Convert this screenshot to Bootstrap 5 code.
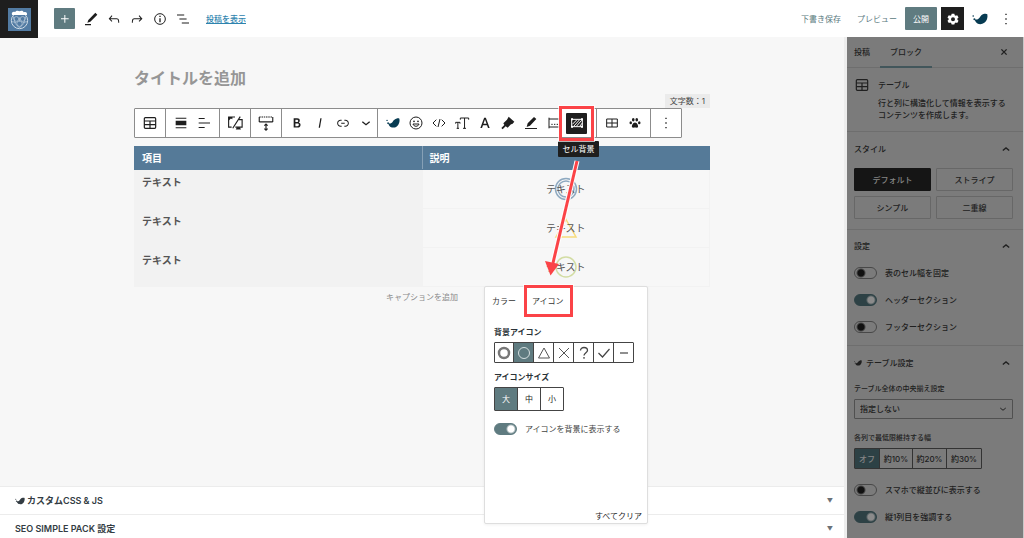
<!DOCTYPE html>
<html lang="ja">
<head>
<meta charset="utf-8">
<meta name="viewport" content="width=device-width, initial-scale=1">
<title>投稿を編集</title>
<link href="https://cdn.jsdelivr.net/npm/bootstrap@5.3.0/dist/css/bootstrap.min.css" rel="stylesheet">
<style>
  :root { --teal:#5f7b80; --ink:#1e1e1e; --steel:#557a98; --red:#fb4347; --dim:#7b7b7b; --dim-line:#6e6e6e; }
  body { font-family:Inter,"Noto Sans CJK JP",sans-serif; font-size:8px; line-height:12px; color:var(--ink); background:#f7f7f7; }
  button { color:inherit; font:inherit; background:none; border:0; padding:0; }
  svg { display:block; fill:currentColor; }
  .ic { width:16px; height:16px; }
  .line { fill:none; stroke:currentColor; stroke-width:1.5; }
  .btn { --bs-btn-font-size:8px; --bs-btn-line-height:12px; --bs-btn-padding-x:0; --bs-btn-padding-y:0; --bs-btn-border-radius:1px; }

  .topbar { height:37px; background:#fff; }
  .site-logo { width:38px; height:38px; background:var(--ink); }
  .tool { width:23px; height:22px; }
  .btn-teal { background:var(--teal); color:#fff; border:0; }
  .btn-add { width:21px; height:21px; }
  .btn-publish { width:32px; height:23px; }
  .view-link { color:#2d83ae; font-weight:500; }
  .text-tool { color:#5b7a80; }
  .btn-gear { background:var(--ink); color:#fff; width:23px; height:23px; }
  .navy { color:#073b52; }

  .canvas { max-width:576px; width:100%; padding-top:29px; }
  .post-title { font-size:16px; line-height:24px; color:#969696; font-weight:600; }
  .char-count { background:#ebebeb; height:14px; line-height:14px; padding:0 5px; color:#444; }
  .block-bar { background:#fff; border:1px solid #8c8c8c; border-radius:1px; height:30px; width:fit-content; }
  .bar-group { padding:0 4px 0 3px; border-right:1px solid #8c8c8c; }
  .bar-group:last-child { border-right:0; }
  .bar-rich { padding-right:8px; }
  .active-tool { width:21px; height:21px; background:var(--ink); color:#fff; border-radius:1px; }
  .frame { position:absolute; border:3px solid var(--red); box-shadow:0 0 0 1px #ffffffb0; z-index:5; pointer-events:none; }
  .frame-tool { inset:-7px; }
  .tip { position:absolute; top:28px; left:-8px; width:41px; line-height:16px; background:var(--ink); color:#fff; border-radius:1px; z-index:4; }

  .sheet { font-size:10px; line-height:14px; table-layout:fixed; color:#555; margin-top:8px; }
  .sheet th, .sheet td { border:1px solid #f2f2f2; padding:0 7px; height:39px; }
  .sheet thead th { background:var(--steel); color:#fff; height:23px; border-color:var(--steel); border-right-color:#86a0b6; }
  .sheet thead th:last-child { border-right-color:var(--steel); }
  .sheet tbody th { background:#f2f2f2; vertical-align:top; padding-top:5px; font-weight:600; }
  .sheet td { text-align:center; }
  .mark-cell { position:relative; display:inline-block; }
  .mark-cell svg { position:absolute; inset:50% auto auto 50%; translate:-50% -50%; width:24px; height:24px; fill:none; }
  .mark-cell span { position:relative; }
  .caption-hint { color:#8a8a8a; line-height:12px; padding-top:4px; }
  .arrow { position:absolute; left:536px; top:116px; width:56px; height:126px; z-index:6; pointer-events:none; }

  .pop { position:absolute; left:484px; top:249px; width:164px; height:238px; background:#fff; border:1px solid #dedede; border-radius:2px; box-shadow:0 1px 3px #0000000f; z-index:3; padding:0 9px; }
  .pop-tabs { margin:0 -2px 11px; }
  .pop-tab { height:28px; color:#333; }
  .frame-tab { inset:-2px -9px -2px -8px; }
  .pop h2 { font-size:8px; line-height:12px; font-weight:700; color:#2b3338; }
  .pop .opt { color:#444; font-weight:400; }
  .pop-clear { margin:0 -4px 1px 0; }
  .seg { display:flex; width:fit-content; border:1px solid #444; border-radius:1px; }
  .seg button { border-right:1px solid #444; }
  .seg button:last-child { border-right:0; }
  .seg .on { background:var(--teal); color:#fff; }
  .seg-icon button { width:20px; height:19px; }
  .seg-icon button:first-child, .seg-icon button:last-child { width:19px; }
  .seg-size button { width:23px; height:22px; }
  .seg-size button:last-child { width:22px; }

  .switch { appearance:none; flex:none; width:23px; height:12px; border:1px solid #222; border-radius:6px; margin:0; background:radial-gradient(circle at 6px 5px,#111 3px,transparent 5px); }
  .switch:checked { background:radial-gradient(circle at 16px 5px,#fff 3px,var(--teal) 5px); border-color:var(--teal); }
  .side .switch { border-color:#484848; }
  .side .switch:checked { background:radial-gradient(circle at 16px 5px,#8b8b8b 3px,#2d4145 5px); border-color:#2d4145; }

  .side { width:180px; flex:none; background:var(--dim); color:#202020; border-left:3px solid #ededed; border-right:1px solid #c8c8c8; }
  .side-tabs { height:31px; border-bottom:1px solid var(--dim-line); padding-left:7px; font-weight:500; }
  .side-tabs button { font-weight:500; }
  .side-tabs .current { width:52px; margin-left:10px; border-bottom:2px solid #42565b; margin-bottom:-1px; }
  .panel { padding:0 10px 0 7px; border-bottom:1px solid var(--dim-line); }
  .panel h2 { font-size:8px; line-height:12px; font-weight:500; margin:0; }
  .panel-card { padding-top:9px; height:64px; }
  .panel-head { height:33px; }
  .styles { display:grid; grid-template-columns:1fr 1fr; gap:5px; padding:3px 0 10px; }
  .styles button { height:23px; border:1px solid #676767; border-radius:1px; font-weight:500; }
  .styles .chosen { background:#151515; color:#858585; border-color:#151515; }
  .panel-head-low { height:29px; padding-top:3px; }
  .panel-toggles { padding-bottom:5px; }
  .opt { height:27px; gap:8px; font-weight:500; }
  .tiny { font-size:7px; line-height:12px; font-weight:500; }
  .tiny-next { margin-top:13px; }
  .pick { appearance:none; height:20px; width:100%; border:1px solid #505050; border-radius:1px; background:transparent; color:#202020; font-size:8px; font-weight:500; padding:0 5px; }
  .side .seg { border-color:#333; font-weight:500; }
  .side .seg button { height:19px; width:34px; border-color:#333; }
  .side .seg .on { width:25px; background:#2d4145; color:#858585; }
  .side .seg .on + button { width:33px; }
  .after-seg { margin-top:7px; }

  .meta-row { background:#fff; border-top:1px solid #ececec; font-size:9px; font-weight:700; color:#333c43; padding:8px 11px 3px 15px; }
  .meta-row:first-child { padding-bottom:7px; }
  .meta-row h2 { font-size:9px; line-height:12px; font-weight:600; margin:0; gap:2px; }
  .meta-row small { font-size:6px; color:#6b7177; }
</style>
</head>
<body>
<svg class="d-none" aria-hidden="true">
  <symbol id="bird" viewBox="0 0 24 24"><path d="M4 12.500c3.500.8 6-.3 7.500-2.800C13 7 15.500 4.800 18.500 4.200c2-.4 3.600-.1 4.500.6 1 5.200-.8 10.200-4.500 13-4 3-9.800 2.700-12.500-.8-1.100-1.400-1.800-2.800-2-4.500z"/><circle cx="1.800" cy="7.500" r="1.200"/><circle cx="3.600" cy="12.300" r="1.500"/></symbol>
  <symbol id="up" viewBox="0 0 24 24"><path d="M6.500 14.500l5.500-4.500 5.500 4.500" fill="none" stroke="currentColor" stroke-width="2.400"/></symbol>
  <symbol id="down" viewBox="0 0 24 24"><path d="M6.500 10l5.500 4.500 5.500-4.500" fill="none" stroke="currentColor" stroke-width="2"/></symbol>
  <symbol id="grid" viewBox="0 0 24 24"><g fill="none" stroke="currentColor" stroke-width="1.800"><rect x="3.500" y="4" width="17" height="16" rx="1.500"/><path d="M3.500 9h17M3.500 14.500h17M12 9v11"/></g></symbol>
  <symbol id="dots" viewBox="0 0 24 24"><path d="M13 20h-2v-2h2v2zm0-7h-2v-2h2v2zm0-7h-2V4h2v2z"/></symbol>
  <symbol id="pen" viewBox="0 0 24 24"><path d="M8 13.500L18.500 2.500l3 3L11 16l-4.500 1.500zM3 19.500h9v2H3z"/></symbol>
</svg>

<div class="min-vh-100 d-flex flex-column">
  <header class="topbar d-flex align-items-center">
    <a href="#" class="site-logo d-flex align-items-center justify-content-center align-self-start" aria-label="ダッシュボード">
      <svg width="23" height="23" viewBox="0 0 22 22"><path fill="#527ba3" d="M0 0h22v22H0z"/><circle cx="11" cy="12" r="7.800" fill="none" stroke="#d5e0e9" stroke-width=".9"/><g fill="none" stroke="#b9cbdb" stroke-width=".7"><circle cx="8" cy="10.500" r="2.300"/><circle cx="14" cy="10.500" r="2.300"/><circle cx="11" cy="15" r="2.600"/><path d="M11 9v4M5 8l2 7 4 4 4-4 2-7M4 13l4 1M18 13l-4 1"/></g><path d="M4 6.800c-1.200-2.500.8-3.800 2.800-3 1-1.500 3-1.500 4-.6 2-1.200 4-.6 4.200.8 2.600-.8 3.800.8 3 2.800z" fill="#fff"/></svg>
    </a>
    <nav class="d-flex align-items-center flex-grow-1" aria-label="ツール">
      <button class="btn btn-teal btn-add d-flex align-items-center justify-content-center ms-3" aria-label="追加"><svg class="ic" viewBox="0 0 24 24"><path d="M11 12.500V17.500H12.500V12.500H17.500V11H12.500V6H11V11H6V12.500H11Z"/></svg></button>
      <div class="d-flex ms-1">
        <button class="tool d-flex align-items-center justify-content-center" aria-label="編集"><svg class="ic"><use href="#pen"/></svg></button>
        <button class="tool d-flex align-items-center justify-content-center" aria-label="元に戻す"><svg class="ic" viewBox="0 0 24 24"><path d="M18.300 11.700c-.6-.6-1.400-.9-2.300-.9H6.700l2.900-3.300-1.100-1-4.500 5L8.500 16l1-1-2.700-2.700H16c.5 0 .9.2 1.300.5 1 1 1 3.400 1 4.500v.3h1.500v-.2c0-1.500 0-4.300-1.500-5.700z"/></svg></button>
        <button class="tool d-flex align-items-center justify-content-center" aria-label="やり直す"><svg class="ic" viewBox="0 0 24 24"><path d="M15.600 6.500l-1.100 1 2.900 3.300H8c-.9 0-1.700.3-2.300.9-1.400 1.500-1.400 4.200-1.400 5.600v.2h1.500v-.3c0-1.100 0-3.500 1-4.500.3-.3.7-.5 1.300-.5h9.200L14.500 15l1.100 1.100 4.600-4.600-4.600-5z"/></svg></button>
        <button class="tool d-flex align-items-center justify-content-center" aria-label="詳細"><svg class="ic" viewBox="0 0 24 24"><circle cx="12" cy="12" r="8" class="line"/><path d="M11 11h2v6h-2zM11 7h2v2h-2z"/></svg></button>
        <button class="tool d-flex align-items-center justify-content-center" aria-label="リスト表示"><svg class="ic" viewBox="0 0 24 24"><path d="M13.800 5.200H3v1.500h10.800V5.200zm-3.600 12v1.500H21v-1.500H10.200zm7.200-6H6.600v1.500h10.800v-1.500z"/></svg></button>
      </div>
      <a href="#" class="view-link ms-2 ps-1">投稿を表示</a>
    </nav>
    <div class="d-flex align-items-center">
      <button class="text-tool">下書き保存</button>
      <button class="text-tool ms-3 me-2">プレビュー</button>
      <button class="btn btn-teal btn-publish me-1">公開</button>
      <button class="btn-gear d-flex align-items-center justify-content-center" aria-label="設定"><svg class="ic" viewBox="0 0 24 24"><path fill-rule="evenodd" d="M10 4h4l.6 2.200 1.500.9 2.200-.8 2 3.400-1.700 1.600v1.800l1.700 1.600-2 3.400-2.200-.8-1.500.9L14 20.400h-4l-.6-2.200-1.500-.9-2.200.8-2-3.400 1.700-1.600v-1.800L3.700 9.700l2-3.400 2.200.8 1.500-.9zM12 9.200a3 3 0 1 0 0 6 3 3 0 0 0 0-6z"/></svg></button>
      <button class="navy ms-2" aria-label="SWELL"><svg class="ic"><use href="#bird"/></svg></button>
      <button class="ms-2 me-2 px-1" aria-label="オプション"><svg width="12" height="16" viewBox="4 0 16 24"><path d="M13 20h-2v-2h2v2zm0-7h-2v-2h2v2zm0-7h-2V4h2v2z"/></svg></button>
    </div>
  </header>

  <div class="d-flex flex-grow-1">
    <main class="flex-grow-1 d-flex flex-column position-relative">
      <div class="flex-grow-1 d-flex justify-content-center">
        <div class="canvas">
          <h1 class="post-title mb-0">タイトルを追加</h1>
          <div class="d-flex justify-content-end pt-1"><span class="char-count">文字数：1</span></div>
          <div class="block-bar d-flex" role="toolbar" aria-label="ブロックツール">
            <div class="bar-group d-flex align-items-center"><button class="tool d-flex align-items-center justify-content-center" aria-label="テーブル"><svg class="ic"><use href="#grid"/></svg></button></div>
            <div class="bar-group d-flex align-items-center">
              <button class="tool d-flex align-items-center justify-content-center" aria-label="配置"><svg class="ic" viewBox="0 0 24 24"><path d="M4 4h16v1.600H4zM4 8.500h16v7H4zM4 18.400h16V20H4z"/></svg></button>
              <button class="tool d-flex align-items-center justify-content-center" aria-label="カラム揃え"><svg class="ic" viewBox="0 0 24 24"><path d="M4 4.500h9V6H4zM4 11.200h17v1.500H4zM4 18h9v1.500H4z"/></svg></button>
            </div>
            <div class="bar-group d-flex align-items-center"><button class="tool d-flex align-items-center justify-content-center" aria-label="表示デバイス"><svg width="18" height="18" viewBox="0 0 24 24"><g class="line"><path d="M7.500 17.500H3.500V4H12M9 19L19 3.500M17.500 7.500H21.500v10H12.500"/></g><path d="M3.500 4h5v3L6.500 6 3.500 9zM14.500 17.500h4l1.500 3h-7z"/></svg></button></div>
            <div class="bar-group d-flex align-items-center"><button class="tool d-flex align-items-center justify-content-center" aria-label="余白"><svg width="18" height="18" viewBox="0 0 24 24"><g class="line"><path d="M3 10.500V4M21 10.500V4M3 10.500h18M12 13.500v8M9.800 15.500l2.200-2 2.200 2M9.800 19.500l2.200 2 2.200-2"/><path d="M3 4h18" stroke-dasharray="2 1"/></g></svg></button></div>
            <div class="bar-group d-flex align-items-center pe-0">
              <button class="tool d-flex align-items-center justify-content-center" aria-label="太字"><svg class="ic" viewBox="0 0 24 24"><path d="M14.700 11.300c1-.6 1.500-1.600 1.500-3 0-2.300-1.300-3.400-4-3.400H7v14h5.800c1.400 0 2.500-.3 3.300-1 .8-.7 1.200-1.700 1.200-2.900.1-1.900-.8-3.100-2.600-3.700zm-5.100-4h2.300c.6 0 1.100.1 1.400.4.3.3.5.7.5 1.200s-.2 1-.5 1.200c-.3.3-.8.4-1.400.4H9.600V7.300zm4.600 9c-.4.3-1 .4-1.700.4H9.600v-3.900h2.900c.7 0 1.300.2 1.700.5.4.3.6.8.6 1.500s-.2 1.200-.6 1.500z"/></svg></button>
              <button class="tool d-flex align-items-center justify-content-center" aria-label="イタリック"><svg class="ic" viewBox="0 0 24 24"><path d="M12.500 5L10 19h1.900l2.500-14z"/></svg></button>
              <button class="tool d-flex align-items-center justify-content-center" aria-label="リンク"><svg class="ic" viewBox="0 0 24 24"><path d="M15.600 7.200H14v1.500h1.600c2 0 3.700 1.700 3.700 3.700s-1.700 3.700-3.700 3.700H14v1.500h1.600c2.800 0 5.200-2.300 5.200-5.200 0-2.900-2.300-5.200-5.200-5.200zM4.700 12.400c0-2 1.700-3.700 3.700-3.700H10V7.200H8.400c-2.900 0-5.200 2.300-5.200 5.200 0 2.900 2.300 5.200 5.200 5.200H10v-1.500H8.400c-2 0-3.700-1.700-3.700-3.700zm4.600.9h5.300v-1.500H9.300v1.500z"/></svg></button>
              <button class="tool d-flex align-items-center justify-content-center" aria-label="さらに表示"><svg class="ic"><use href="#down"/></svg></button>
            </div>
            <div class="bar-group bar-rich d-flex align-items-center">
              <button class="tool d-flex align-items-center justify-content-center navy" aria-label="SWELL装飾"><svg width="14" height="14"><use href="#bird"/></svg></button>
              <button class="tool d-flex align-items-center justify-content-center" aria-label="絵文字"><svg class="ic" viewBox="0 0 24 24"><circle cx="12" cy="12" r="9" class="line"/><path class="line" d="M7.500 13.500c1 4.500 8 4.500 9 0z"/><circle cx="9" cy="9.500" r="1.300"/><circle cx="15" cy="9.500" r="1.300"/></svg></button>
              <button class="tool d-flex align-items-center justify-content-center" aria-label="コード"><svg class="ic" viewBox="0 0 24 24"><path class="line" d="M8 7L3 12l5 5M16 7l5 5-5 5M13.500 6l-3 12"/></svg></button>
              <button class="tool d-flex align-items-center justify-content-center" aria-label="フォントサイズ"><svg class="ic" viewBox="0 0 24 24"><path class="line" d="M9.500 7V4.500H22V7M15.800 4.500V20M13.500 20h4.500M2.500 13v-2H9v2M5.800 11v9M4 20h3.500"/></svg></button>
              <button class="tool d-flex align-items-center justify-content-center" aria-label="文字色"><svg class="ic" viewBox="0 0 24 24"><path d="M10.700 4h2.600l5.700 15.500h-2.500l-1.500-4.200H9l-1.500 4.200H5zM12 6.700l-2.300 6.600h4.600z"/></svg></button>
              <button class="tool d-flex align-items-center justify-content-center" aria-label="マーカー"><svg class="ic" viewBox="0 0 24 24"><path d="M13 2.500l8.500 7.500-3 3.500-2 .2-5 5.300-3-2L4 21.500l-2-2L6.500 15 5 12.500 10.500 7z"/></svg></button>
              <button class="tool d-flex align-items-center justify-content-center" aria-label="下線"><svg class="ic" viewBox="0 0 24 24"><path d="M7 12.500L16.500 3l3.500 3L10.500 16 5.500 18zM3 19.500h18V21H3z"/></svg></button>
              <button class="tool d-flex align-items-center justify-content-center" aria-label="余白調整"><svg class="ic" viewBox="0 0 24 24"><path class="line" d="M4.500 4v16M4.500 6H21M4.500 18H21M8 14h2m2 0h2m2 0h2"/></svg></button>
              <div class="tool d-flex align-items-center justify-content-center">
                <div class="position-relative">
                  <button class="active-tool d-flex align-items-center justify-content-center" aria-label="セル背景"><svg class="ic" viewBox="0 0 24 24"><path class="line" d="M4 6.500h16v11H4zM5 14l7-7M7 17l9-10M11 17l8-9M16 17l4-5" stroke-width="2"/><path d="M3 5h3v3H3zM18 5h3v3h-3zM3 16h3v3H3zM18 16h3v3h-3z"/></svg></button>
                  <span class="frame frame-tool"></span>
                  <span class="tip text-center" role="tooltip">セル背景</span>
                </div>
              </div>
            </div>
            <div class="bar-group d-flex align-items-center">
              <button class="tool d-flex align-items-center justify-content-center" aria-label="表を編集"><svg class="ic" viewBox="0 0 24 24"><path class="line" d="M4 6h16v12H4zM4 12h16M12 6v12"/></svg></button>
              <button class="tool d-flex align-items-center justify-content-center" aria-label="肉球"><svg width="12" height="12" viewBox="0 0 24 24"><ellipse cx="8.500" cy="5.500" rx="2.600" ry="3.600"/><ellipse cx="15.500" cy="5.500" rx="2.600" ry="3.600"/><ellipse cx="3.500" cy="11.500" rx="2.500" ry="3.200"/><ellipse cx="20.500" cy="11.500" rx="2.500" ry="3.200"/><path d="M12 11c4 0 7 6 6 9-1 2.500-4 1-6 1s-5 1.500-6-1c-1-3 2-9 6-9z"/></svg></button>
            </div>
            <div class="bar-group d-flex align-items-center"><button class="tool d-flex align-items-center justify-content-center" aria-label="オプション"><svg class="ic"><use href="#dots"/></svg></button></div>
          </div>

          <table class="sheet w-100 mb-0">
            <thead><tr><th scope="col">項目</th><th scope="col">説明</th></tr></thead>
            <tbody>
              <tr><th scope="row">テキスト</th><td><div class="mark-cell"><svg viewBox="0 0 24 24"><circle cx="12" cy="12" r="10.500" stroke="#8ea9c0" stroke-width="1.500"/><circle cx="12" cy="12" r="8" stroke="#8ea9c0" stroke-width="1.500"/></svg><span>テキスト</span></div></td></tr>
              <tr><th scope="row">テキスト</th><td><div class="mark-cell"><svg viewBox="0 0 24 24"><path d="M12 3.500L22 21H2z" stroke="#f8dc7c" stroke-width="1.500"/></svg><span>テキスト</span></div></td></tr>
              <tr><th scope="row">テキスト</th><td><div class="mark-cell"><svg viewBox="0 0 24 24"><circle cx="12" cy="12" r="10" stroke="#d3dda4" stroke-width="1.500"/></svg><span>テキスト</span></div></td></tr>
            </tbody>
          </table>
          <div class="caption-hint text-center">キャプションを追加</div>
        </div>
      </div>

      <svg class="arrow" viewBox="0 0 56 126"><path d="M41 8L17 110" fill="none" stroke="#fff" stroke-width="5"/><path d="M41 8L17 110" fill="none" stroke="#fb4347" stroke-width="3"/><path d="M9 108l14 3-8.500 11.500z" fill="#fb4347"/></svg>

      <section class="pop d-flex flex-column" aria-label="セル背景">
        <div class="pop-tabs d-flex">
          <button class="pop-tab">カラー</button>
          <div class="position-relative ms-3"><button class="pop-tab">アイコン</button><span class="frame frame-tab"></span></div>
        </div>
        <h2 class="mb-1">背景アイコン</h2>
        <div class="seg seg-icon">
          <button class="d-flex align-items-center justify-content-center" aria-label="二重丸"><svg class="ic" viewBox="0 0 16 16"><circle cx="8" cy="8" r="5" fill="none" stroke="#777" stroke-width="2.500"/></svg></button>
          <button class="on d-flex align-items-center justify-content-center" aria-label="丸"><svg class="ic" viewBox="0 0 16 16"><circle cx="8" cy="8" r="5.500" fill="none" stroke="#d5dfe0"/></svg></button>
          <button class="d-flex align-items-center justify-content-center" aria-label="三角"><svg class="ic" viewBox="0 0 16 16"><path d="M8 3l5.500 10h-11z" fill="none" stroke="#555"/></svg></button>
          <button class="d-flex align-items-center justify-content-center" aria-label="バツ"><svg class="ic" viewBox="0 0 16 16"><path d="M3 3l10 10M13 3L3 13" fill="none" stroke="#555"/></svg></button>
          <button class="d-flex align-items-center justify-content-center" aria-label="はてな"><svg class="ic" viewBox="0 0 16 16"><path d="M4.500 5.500c0-4 7-4 7 0 0 2-3.500 2.500-3.500 5M8 12v1.700" fill="none" stroke="#444" stroke-width="1.300"/></svg></button>
          <button class="d-flex align-items-center justify-content-center" aria-label="チェック"><svg class="ic" viewBox="0 0 16 16"><path d="M2.500 8l4 4 7-8" fill="none" stroke="#444" stroke-width="1.200"/></svg></button>
          <button class="d-flex align-items-center justify-content-center" aria-label="線"><svg class="ic" viewBox="0 0 16 16"><path d="M4 8h8" fill="none" stroke="#444" stroke-width="1.200"/></svg></button>
        </div>
        <h2 class="mb-1 mt-2">アイコンサイズ</h2>
        <div class="seg seg-size"><button class="on">大</button><button>中</button><button>小</button></div>
        <label class="d-flex align-items-center opt mt-1"><input type="checkbox" class="switch" checked>アイコンを背景に表示する</label>
        <button class="pop-clear mt-auto align-self-end">すべてクリア</button>
      </section>

      <div>
        <div class="meta-row d-flex justify-content-between"><h2 class="d-flex align-items-center"><svg width="10" height="10"><use href="#bird"/></svg>カスタムCSS &amp; JS</h2><small>▼</small></div>
        <div class="meta-row d-flex justify-content-between"><h2>SEO SIMPLE PACK 設定</h2><small>▼</small></div>
      </div>
    </main>

    <aside class="side">
      <div class="side-tabs d-flex">
        <button>投稿</button><button class="current">ブロック</button>
        <button class="ms-auto me-2 pe-1" aria-label="閉じる"><svg width="14" height="14" viewBox="0 0 24 24"><path d="M7.500 7.500l9 9M16.500 7.500l-9 9" fill="none" stroke="currentColor" stroke-width="2.400"/></svg></button>
      </div>
      <div class="panel panel-card d-flex gap-2">
        <svg class="ic"><use href="#grid"/></svg>
        <div><h2 class="mb-1 pt-1 lh-1">テーブル</h2><p class="mb-0 text-nowrap fw-medium pt-1">行と列に構造化して情報を表示する<br>コンテンツを作成します。</p></div>
      </div>
      <div class="panel">
        <div class="panel-head d-flex align-items-center justify-content-between"><h2>スタイル</h2><svg width="14" height="14"><use href="#up"/></svg></div>
        <div class="styles"><button class="chosen">デフォルト</button><button>ストライプ</button><button>シンプル</button><button>二重線</button></div>
      </div>
      <div class="panel panel-toggles">
        <div class="panel-head-low d-flex align-items-center justify-content-between"><h2>設定</h2><svg width="14" height="14"><use href="#up"/></svg></div>
        <label class="d-flex align-items-center opt"><input type="checkbox" class="switch">表のセル幅を固定</label>
        <label class="d-flex align-items-center opt"><input type="checkbox" class="switch" checked>ヘッダーセクション</label>
        <label class="d-flex align-items-center opt"><input type="checkbox" class="switch">フッターセクション</label>
      </div>
      <div class="panel border-0">
        <div class="panel-head d-flex align-items-center justify-content-between mb-1"><h2 class="d-flex align-items-center gap-1"><svg width="8" height="8"><use href="#bird"/></svg>テーブル設定</h2><svg width="14" height="14"><use href="#up"/></svg></div>
        <label class="tiny d-block mb-1" for="center">テーブル全体の中央揃え設定</label>
        <div class="position-relative"><select id="center" class="pick"><option>指定しない</option></select><svg width="12" height="12" class="position-absolute top-50 end-0 translate-middle-y me-1"><use href="#down"/></svg></div>
        <div class="tiny tiny-next pb-1">各列で最低限維持する幅</div>
        <div class="seg"><button class="on">オフ</button><button>約10%</button><button>約20%</button><button>約30%</button></div>
        <label class="d-flex align-items-center opt after-seg"><input type="checkbox" class="switch">スマホで縦並びに表示する</label>
        <label class="d-flex align-items-center opt"><input type="checkbox" class="switch" checked>縦1列目を強調する</label>
      </div>
    </aside>
  </div>
</div>
<script src="https://cdn.jsdelivr.net/npm/bootstrap@5.3.0/dist/js/bootstrap.bundle.min.js"></script>
</body>
</html>
